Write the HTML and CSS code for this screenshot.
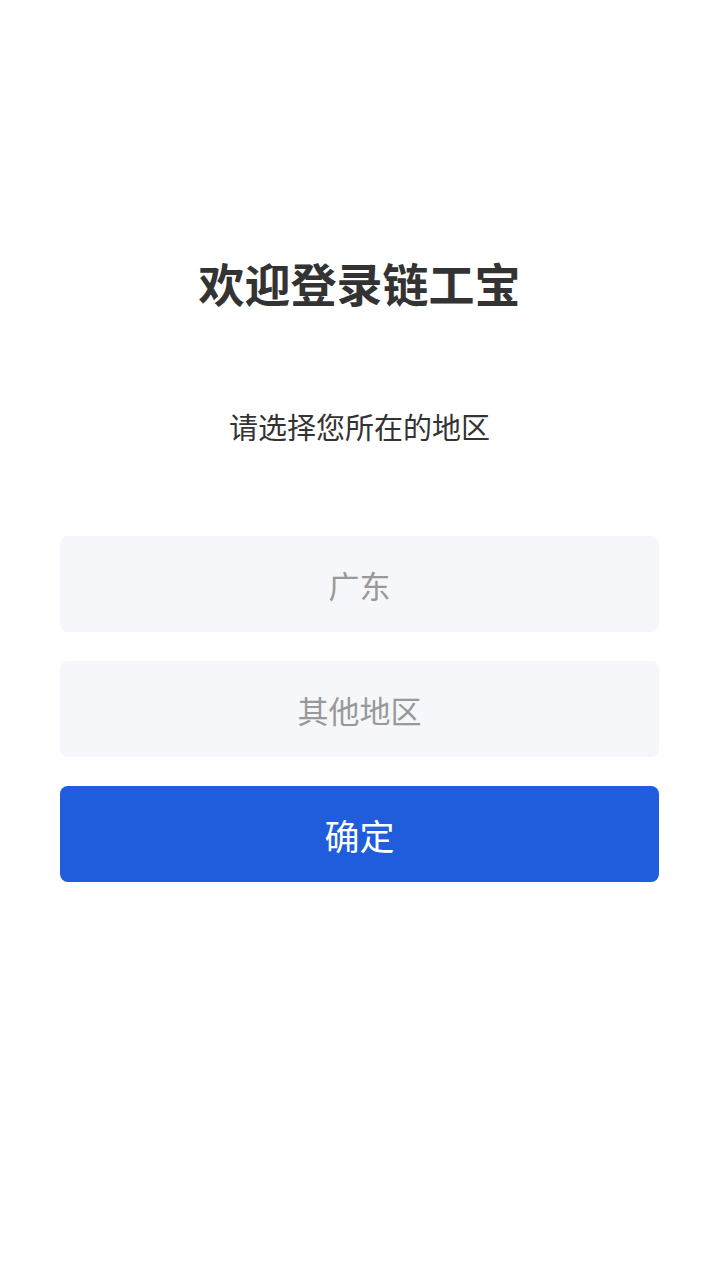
FILE: index.html
```html
<!DOCTYPE html>
<html lang="zh-CN">
<head>
    <meta charset="UTF-8">
    <meta name="viewport" content="width=device-width, initial-scale=1.0">
    <title>欢迎登录链工宝</title>
    <link rel="stylesheet" href="styles.css">
</head>
<body>
    <div class="container">
        <h1 class="title">欢迎登录链工宝</h1>
        <p class="subtitle">请选择您所在的地区</p>
        <div class="region-list">
            <div class="region">广东</div>
            <div class="region">其他地区</div>
            <button class="confirm">确定</button>
        </div>
    </div>
</body>
</html>
```

FILE: styles.css
```css
body {
    margin: 0;
    background: #fff;
    font-family: "Noto Sans CJK SC", "Noto Sans", sans-serif;
    color: #333;
}

.container {
    padding: 247px 61px 0 60px;
}

.title {
    margin: 0;
    font-size: 46px;
    font-weight: 700;
    line-height: 70px;
    text-align: center;
}

.subtitle {
    margin: 89px 0 0;
    font-size: 29px;
    line-height: 40px;
    text-align: center;
}

.region-list {
    margin-top: 90px;
    display: flex;
    flex-direction: column;
    gap: 29px;
}

.region {
    height: 96px;
    border-radius: 8px;
    background: #f6f7fb;
    color: #999;
    font-size: 31px;
    display: flex;
    align-items: center;
    justify-content: center;
}

.confirm {
    height: 96px;
    border: none;
    border-radius: 8px;
    background: #1f5ddd;
    color: #fff;
    font-family: inherit;
    font-size: 35px;
}
```
